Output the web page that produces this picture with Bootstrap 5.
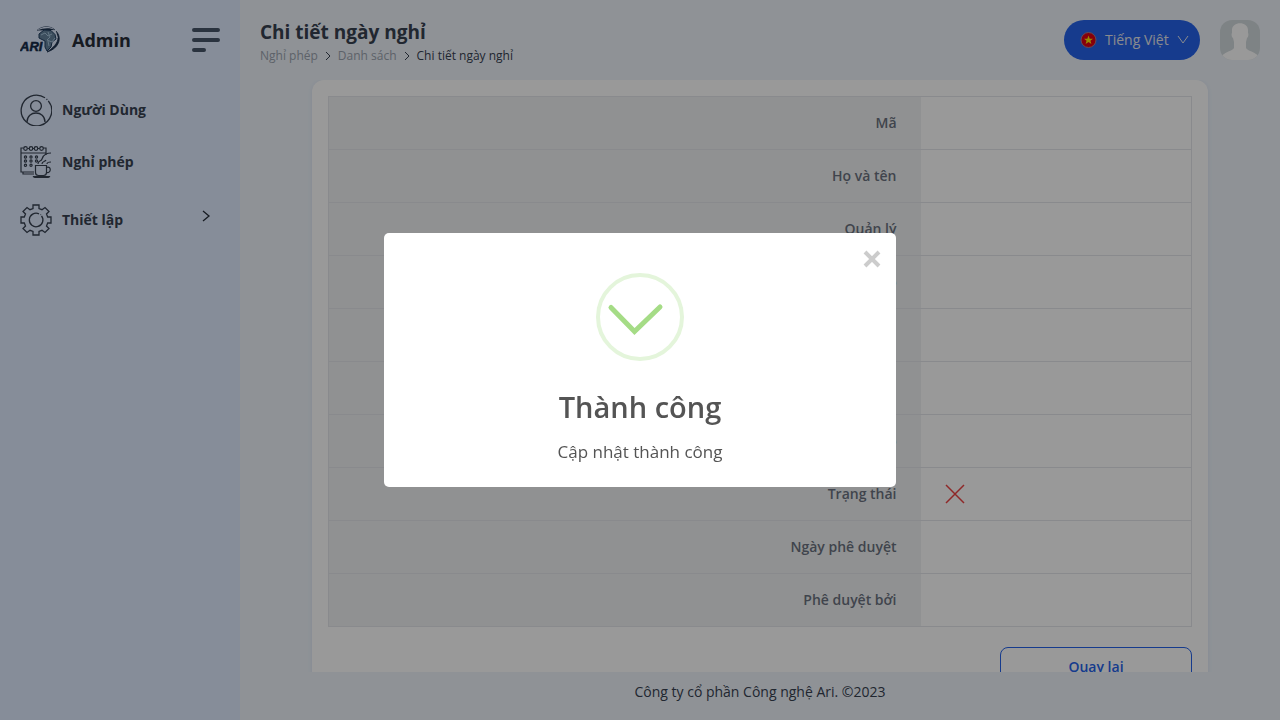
<!DOCTYPE html>
<html lang="vi">
<head>
<meta charset="utf-8">
<meta name="viewport" content="width=device-width, initial-scale=1">
<title>Chi tiết ngày nghỉ</title>
<link rel="stylesheet" href="https://cdn.jsdelivr.net/npm/bootstrap@5.3.0/dist/css/bootstrap.min.css">
<style>
  body { font-family: "Segoe UI", "Open Sans", "Noto Sans", sans-serif; font-size: 14px; line-height: 20px; color: #374151; background: #eef4fb; }
  a { color: inherit; text-decoration: none; }
  svg { display: block; flex-shrink: 0; }
  .side-panel { width: 240px; background: #dfebff; }
  .side-head { height: 80px; }
  .brand-name { font-size: 18px; line-height: 28px; font-weight: 700; color: #272e3a; }
  .side-link { height: 52px; gap: 10px; font-weight: 700; }
  .side-group { height: 64px; }
  .page-head { height: 80px; }
  .page-title { font-size: 19px; line-height: 24px; font-weight: 700; }
  .crumbs { font-size: 12px; line-height: 24px; gap: 5px; color: #9ca3af; }
  .crumbs .active { color: #374151; }
  .lang-btn { height: 40px; width: 136px; background: #2563eb; color: #e5e7eb; border: 0; border-radius: 20px; }
  .avatar-pic { border-radius: 12px; overflow: hidden; }
  .scroll-area { min-height: 0; overflow: hidden; }
  .sheet { max-width: 896px; border-radius: 12px; background: #fff; box-shadow: 0 1px 4px #dbe4f3; }
  .info { border: 1px solid #e5e7eb; margin-bottom: 20px; }
  .info > tbody > tr { height: 53px; border-bottom: 1px solid #e5e7eb; }
  .info th { width: 68.6%; background: #f1f2f3; color: #6b7280; font-weight: 600; text-align: right; padding: 0 24px; }
  .info td { padding: 0 24px; }
  .back-btn { width: 192px; height: 40px; background: #fff; border: 1px solid #2563eb; border-radius: 8px; color: #2563eb; font-weight: 600; }
  .page-foot { height: 48px; padding-bottom: 8px; }
  .modal-backdrop.show { opacity: .4; }
  .notice { max-width: 512px; }
  .notice .modal-content { border: 0; border-radius: 5px; padding: 40px 20px 20px; color: #545454; }
  .notice h2 { font-size: 29px; line-height: 36px; font-weight: 600; margin: 28px 0 12px; }
  .notice p { font-size: 17px; line-height: 30px; margin: 0; }
  .close-x { top: 12px; right: 10px; width: 28px; height: 28px; border: 0; background: none; padding: 0; }
</style>
</head>
<body class="overflow-hidden">
<div class="d-flex vh-100">
  <aside class="side-panel flex-shrink-0">
    <div class="side-head d-flex align-items-center px-3 mx-1">
      <a href="#" class="d-flex align-items-center gap-2 me-auto">
        <svg width="44" height="28" viewBox="0 0 44 28" role="img" aria-label="ARI">
          <path d="M17 4.500C22-.2 30-.5 35 4M36 5c6 6 4 17-9 21 6-4 11-9 11-14" fill="#1e3450" stroke="#1e3450" stroke-width=".8" fill-rule="evenodd"/>
          <path d="M17 4.500C22-.2 30-.5 35 4 30 1.500 24 1.500 17 4.500z" fill="#dfebff"/>
          <path d="M19 8l5-4 7 .5 4 4 1 4.500-4 3-1 5-4 4-2-4v-6l-6-3z" fill="#64839d" stroke="#1f3d60"/>
          <path d="M21 9l4-2 3 3 4-2M28 6l2 5-3 3 5 2 3-4M28 15l1 5" fill="none" stroke="#a8c6de"/>
          <text x="0" y="25" font-family="Liberation Sans" font-size="13" font-weight="700" font-style="italic" fill="#142a49" stroke="#142a49" stroke-width=".5">ARI</text>
        </svg>
        <span class="brand-name">Admin</span>
      </a>
      <button class="btn p-0 border-0" aria-label="Menu">
        <svg width="28" height="24" viewBox="0 0 28 24" stroke="#475569" stroke-width="4" stroke-linecap="round"><path d="M2 2h24M2 12h24M2 22h10"/></svg>
      </button>
    </div>
    <nav class="px-3 mx-1 pt-1" aria-label="Chính">
      <a href="#" class="side-link d-flex align-items-center">
        <svg width="32" height="32" viewBox="0 0 32 32" fill="none" stroke="#374151" stroke-width="1.3"><path d="M25 3.800A15.300 15.300 0 1 0 28.300 6.800M26.500 5l.8.7"/><circle cx="16" cy="12" r="5.400"/><path d="M7 28c0-12 18-12 18 0"/></svg>
        <span>Người Dùng</span>
      </a>
      <a href="#" class="side-link d-flex align-items-center">
        <svg width="32" height="32" viewBox="0 0 32 32" fill="none" stroke="#374151" stroke-width="1.200"><path d="M3.500 2H1v24h13M3 26v2h11M1 7h25M23 2h3v7M7.500 2.500h2M12.500 2.500h2M17.500 2.500h2"/><g><circle cx="5.500" cy="2.500" r="1.800"/><circle cx="11" cy="2.500" r="1.800"/><circle cx="16" cy="2.500" r="1.800"/><circle cx="21.500" cy="2.500" r="1.800"/></g><g><circle cx="5.500" cy="11" r="1.100"/><circle cx="11" cy="11" r="1.100"/><circle cx="16.500" cy="11" r="1.100"/><circle cx="5.500" cy="15" r="1.100"/><circle cx="11" cy="15" r="1.100"/><circle cx="16.500" cy="15" r="1.100"/><circle cx="5.500" cy="19.300" r="1.100"/><circle cx="11" cy="19.300" r="1.100"/></g><path d="M15.500 19.500h11v7q0 3-3 3h-5q-3 0-3-3zM26.500 21.500c5-2 5 6 0 5M13 30.500h17l-2 1H15zM18 18c0-4 3-2 4-5s2-4 4-5 2-1 5-1M22 18c0-3 3-2 4-4M27 18c0-2 2-2 4-2"/></svg>
        <span>Nghỉ phép</span>
      </a>
      <a href="#" class="side-link side-group d-flex align-items-center">
        <svg width="32" height="32" viewBox="0 0 32 32" fill="none" stroke="#374151" stroke-width="1.300"><path d="M13 1h6v3.500l3 1.200L25 3.500 29 7.500 26.500 10l1.200 3H31v6h-3.300l-1.200 3 2.500 2.500-4 4-3-2.200-3 1.200V31h-6v-3.500l-3-1.200-3 2.200-4-4L5.500 22l-1.200-3H1v-6h3.300l1.200-3L3 7.500l4-4 3 2.200 3-1.200z"/><path d="M19 9.800a6.800 6.800 0 1 0 2.500 2M20.500 10.500l.4.4"/></svg>
        <span class="me-auto">Thiết lập</span>
        <svg class="me-2 mb-2" width="12" height="12" viewBox="0 0 12 12" fill="none" stroke="#272e3a" stroke-width="1.300"><path d="M3 1l6 5-6 5"/></svg>
      </a>
    </nav>
  </aside>

  <div class="d-flex flex-column flex-grow-1">
    <header class="page-head flex-shrink-0 d-flex align-items-start justify-content-between px-3 mx-1 pt-3">
      <div class="pt-1">
        <h1 class="page-title m-0">Chi tiết ngày nghỉ</h1>
        <nav class="crumbs d-flex align-items-center" aria-label="Đường dẫn">
          <a href="#">Nghỉ phép</a>
          <svg width="10" height="10" viewBox="0 0 10 10" fill="none" stroke="#374151"><path d="M3 1l4 4-4 4"/></svg>
          <a href="#">Danh sách</a>
          <svg width="10" height="10" viewBox="0 0 10 10" fill="none" stroke="#374151"><path d="M3 1l4 4-4 4"/></svg>
          <span class="active" aria-current="page">Chi tiết ngày nghỉ</span>
        </nav>
      </div>
      <div class="d-flex pt-1">
        <button class="lang-btn d-flex align-items-center gap-2 px-3 me-3">
          <svg width="17" height="16" viewBox="0 0 17 16"><circle cx="8.500" cy="8" r="7.500" fill="#e00012" stroke="#a78193"/><path d="M8.500 3.500l1.200 3.200h3.300l-2.600 2 1 3.300-2.900-2-2.900 2 1-3.300-2.600-2h3.300z" fill="#ffe600"/></svg>
          <span class="text-nowrap">Tiếng Việt</span>
          <svg width="12" height="12" viewBox="0 0 12 12" fill="none" stroke="#e5e7eb"><path d="M1 2l5 7 5-7"/></svg>
        </button>
        <svg class="avatar-pic ms-1" width="40" height="40" viewBox="0 0 40 40" role="img" aria-label="Ảnh đại diện"><path fill="#d3dbde" d="M0 0h40v40H0z"/><path fill="#fff" d="M12 10c0-9 16-9 16 0v3c1 1 0 5-1 5l-1 4v6c2 3 6 3 10 6q4 2 4 6H0q0-4 4-6c4-3 8-3 10-6v-6l-1-4c-1 0-2-4-1-5z"/></svg>
      </div>
    </header>

    <main class="scroll-area flex-grow-1 px-3">
      <section class="sheet mx-auto p-3">
        <table class="info w-100">
          <tbody>
            <tr><th scope="row">Mã</th><td></td></tr>
            <tr><th scope="row">Họ và tên</th><td></td></tr>
            <tr><th scope="row">Quản lý</th><td></td></tr>
            <tr><th scope="row">Lý do</th><td></td></tr>
            <tr><th scope="row">Bắt đầu</th><td></td></tr>
            <tr><th scope="row">Loại</th><td></td></tr>
            <tr><th scope="row">Bàn giao</th><td></td></tr>
            <tr><th scope="row">Trạng thái</th><td><svg width="20" height="20" viewBox="0 0 20 20" role="img" aria-label="Từ chối" stroke="#ef4444" stroke-width="1.500"><path d="M1 1l18 18M19 1L1 19"/></svg></td></tr>
            <tr><th scope="row">Ngày phê duyệt</th><td></td></tr>
            <tr><th scope="row">Phê duyệt bởi</th><td></td></tr>
          </tbody>
        </table>
        <div class="d-flex justify-content-end"><button class="back-btn">Quay lại</button></div>
      </section>
    </main>
    <footer class="page-foot flex-shrink-0 d-flex align-items-center justify-content-center">Công ty cổ phần Công nghệ Ari. ©2023</footer>
  </div>
</div>

<div class="modal-backdrop show"></div>
<div class="modal show d-block" tabindex="-1" role="dialog" aria-modal="true" aria-labelledby="noticeTitle">
  <div class="modal-dialog modal-dialog-centered notice">
    <div class="modal-content text-center">
      <button class="close-x position-absolute d-flex align-items-center justify-content-center" aria-label="Đóng">
        <svg width="18" height="18" viewBox="0 0 18 18" stroke="#ccc" stroke-width="4"><path d="M2 2l14 14M16 2L2 16"/></svg>
      </button>
      <svg class="mx-auto" width="88" height="88" viewBox="0 0 88 88" fill="none"><circle cx="44" cy="44" r="42" stroke="#e4f5db" stroke-width="4"/><path d="M15 34.500l23.500 24L64 34" stroke="#a5dc86" stroke-width="5" stroke-linecap="round"/></svg>
      <h2 id="noticeTitle">Thành công</h2>
      <p>Cập nhật thành công</p>
    </div>
  </div>
</div>
<script src="https://cdn.jsdelivr.net/npm/bootstrap@5.3.0/dist/js/bootstrap.bundle.min.js"></script>
</body>
</html>
